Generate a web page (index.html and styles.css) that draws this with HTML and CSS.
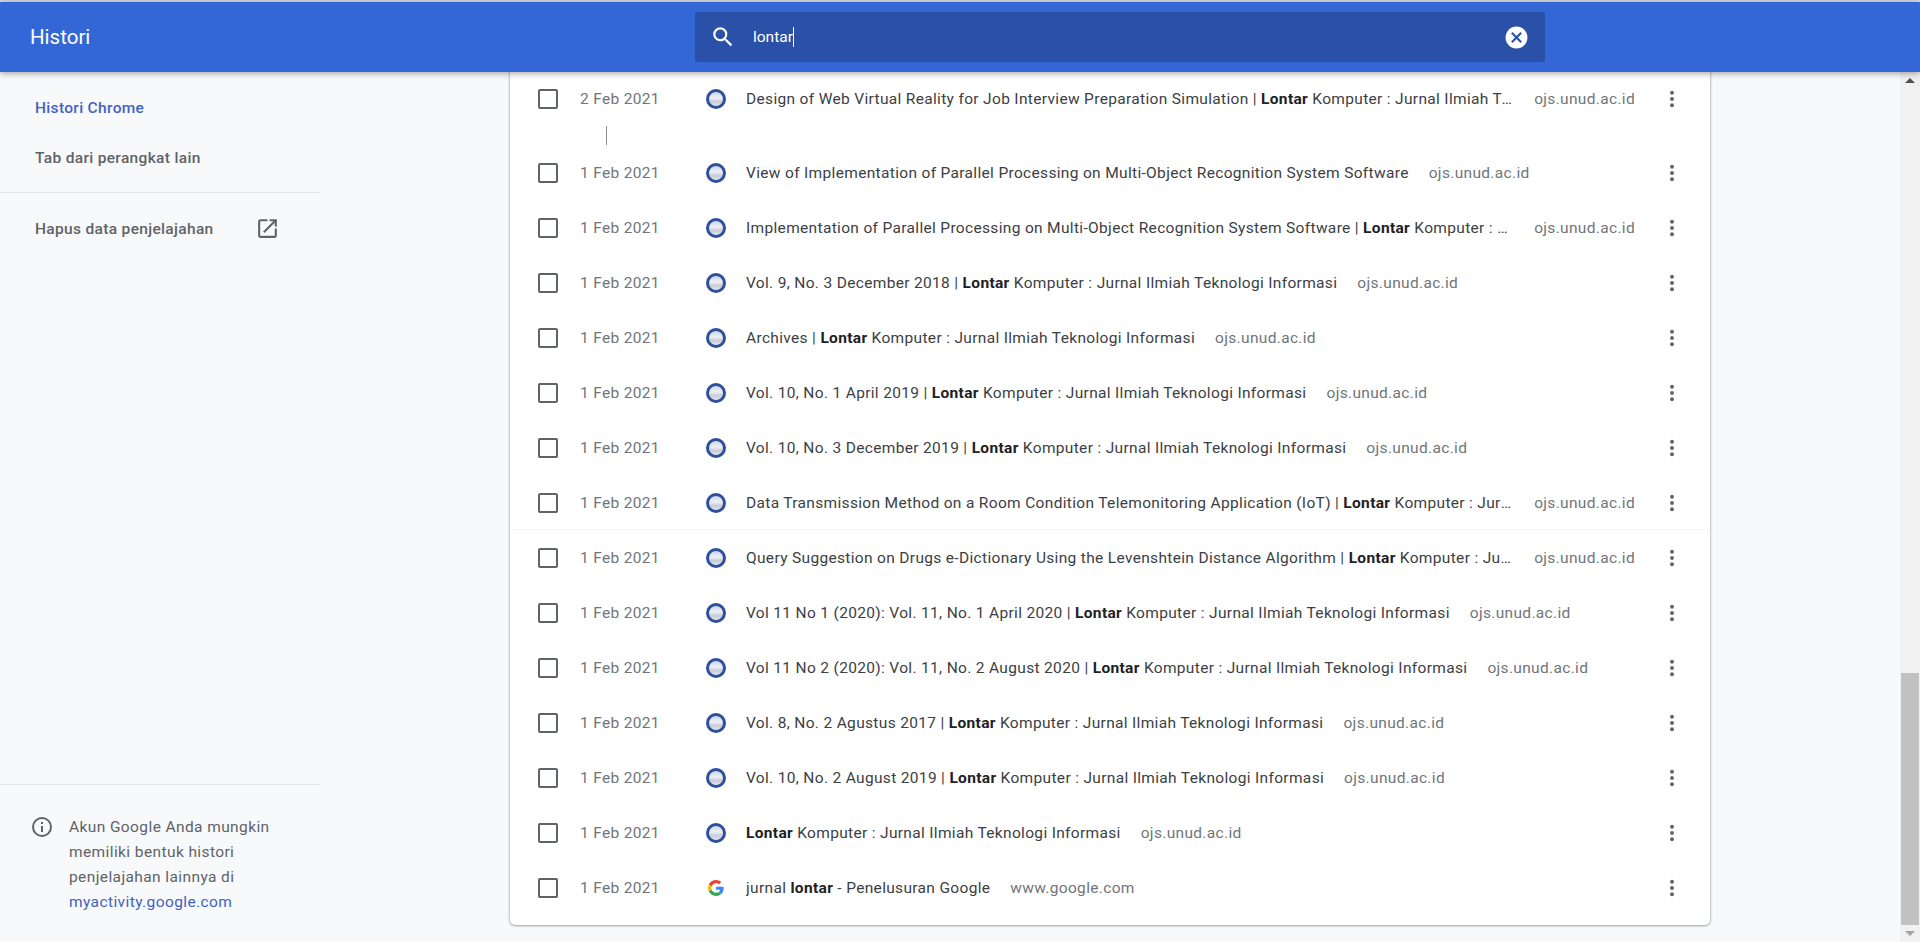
FILE: index.html
```html
<!DOCTYPE html>
<html lang="en">
<head>
    <meta charset="UTF-8">
    <meta name="viewport" content="width=device-width, initial-scale=1.0">
    <title>Histori</title>
    <link rel="stylesheet" href="styles.css">
</head>
<body>
<svg class="icon-defs" width="0" height="0">
    <symbol id="dots" viewBox="0 0 6 24">
        <circle cx="3" cy="5.7" r="1.95"/>
        <circle cx="3" cy="12" r="1.95"/>
        <circle cx="3" cy="18.3" r="1.95"/>
    </symbol>
</svg>
<header class="toolbar">
    <h1 class="toolbar-title">Histori</h1>
    <div class="search-box">
        <svg class="search-icon" viewBox="0 0 24 24"><path d="M15.5 14h-.79l-.28-.27A6.47 6.47 0 0 0 16 9.5 6.5 6.5 0 1 0 9.5 16c1.61 0 3.09-.59 4.23-1.57l.27.28v.79l5 4.99L20.49 19l-4.99-5zm-6 0C7.01 14 5 11.99 5 9.5S7.01 5 9.5 5 14 7.01 14 9.5 11.99 14 9.5 14z"/></svg>
        <span class="search-text">lontar</span><span class="search-caret"></span>
        <svg class="clear-icon" viewBox="0 0 24 24"><path d="M12 1.5a10.5 10.5 0 1 0 0 21 10.5 10.5 0 0 0 0-21zm5.2 14.3-1.4 1.4-3.8-3.8-3.8 3.8-1.4-1.4 3.8-3.8-3.8-3.8 1.4-1.4 3.8 3.8 3.8-3.8 1.4 1.4-3.8 3.8 3.8 3.8z"/></svg>
    </div>
</header>
<div class="page">
    <nav class="sidebar">
        <a class="side-link side-link-active">Histori Chrome</a>
        <a class="side-link">Tab dari perangkat lain</a>
        <div class="side-rule"></div>
        <a class="side-link side-clear">
            Hapus data penjelajahan
            <svg class="open-icon" viewBox="0 0 24 24"><path d="M19 19H5V5h7V3H5a2 2 0 0 0-2 2v14a2 2 0 0 0 2 2h14a2 2 0 0 0 2-2v-7h-2v7zM14 3v2h3.59l-9.83 9.83 1.41 1.41L19 6.41V10h2V3h-7z"/></svg>
        </a>
        <div class="side-footer">
            <svg class="info-icon" viewBox="0 0 24 24"><path d="M11 7h2v2h-2zm0 4h2v6h-2zm1-9a10 10 0 1 0 0 20 10 10 0 0 0 0-20zm0 18a8 8 0 1 1 0-16 8 8 0 0 1 0 16z"/></svg>
            <p class="side-note">Akun Google Anda mungkin memiliki bentuk histori penjelajahan lainnya di <a class="side-note-link">myactivity.google.com</a></p>
        </div>
    </nav>
    <main class="content">
        <section class="history-card">
            <div class="row">
                <span class="check"></span><span class="date">2 Feb 2021</span><span class="favicon"></span>
                <div class="entry"><span class="title">Design of Web Virtual Reality for Job Interview Preparation Simulation | <b>Lontar</b> Komputer : Jurnal Ilmiah Teknologi Informasi</span><span class="domain">ojs.unud.ac.id</span></div>
                <svg class="menu"><use href="#dots"/></svg>
            </div>
            <div class="day-gap"><span class="day-line"></span></div>
            <div class="row">
                <span class="check"></span><span class="date">1 Feb 2021</span><span class="favicon"></span>
                <div class="entry"><span class="title">View of Implementation of Parallel Processing on Multi-Object Recognition System Software</span><span class="domain">ojs.unud.ac.id</span></div>
                <svg class="menu"><use href="#dots"/></svg>
            </div>
            <div class="row">
                <span class="check"></span><span class="date">1 Feb 2021</span><span class="favicon"></span>
                <div class="entry"><span class="title">Implementation of Parallel Processing on Multi-Object Recognition System Software | <b>Lontar</b> Komputer : Jurnal Ilmiah Teknologi Informasi</span><span class="domain">ojs.unud.ac.id</span></div>
                <svg class="menu"><use href="#dots"/></svg>
            </div>
            <div class="row">
                <span class="check"></span><span class="date">1 Feb 2021</span><span class="favicon"></span>
                <div class="entry"><span class="title">Vol. 9, No. 3 December 2018 | <b>Lontar</b> Komputer : Jurnal Ilmiah Teknologi Informasi</span><span class="domain">ojs.unud.ac.id</span></div>
                <svg class="menu"><use href="#dots"/></svg>
            </div>
            <div class="row">
                <span class="check"></span><span class="date">1 Feb 2021</span><span class="favicon"></span>
                <div class="entry"><span class="title">Archives | <b>Lontar</b> Komputer : Jurnal Ilmiah Teknologi Informasi</span><span class="domain">ojs.unud.ac.id</span></div>
                <svg class="menu"><use href="#dots"/></svg>
            </div>
            <div class="row">
                <span class="check"></span><span class="date">1 Feb 2021</span><span class="favicon"></span>
                <div class="entry"><span class="title">Vol. 10, No. 1 April 2019 | <b>Lontar</b> Komputer : Jurnal Ilmiah Teknologi Informasi</span><span class="domain">ojs.unud.ac.id</span></div>
                <svg class="menu"><use href="#dots"/></svg>
            </div>
            <div class="row">
                <span class="check"></span><span class="date">1 Feb 2021</span><span class="favicon"></span>
                <div class="entry"><span class="title">Vol. 10, No. 3 December 2019 | <b>Lontar</b> Komputer : Jurnal Ilmiah Teknologi Informasi</span><span class="domain">ojs.unud.ac.id</span></div>
                <svg class="menu"><use href="#dots"/></svg>
            </div>
            <div class="row row-split">
                <span class="check"></span><span class="date">1 Feb 2021</span><span class="favicon"></span>
                <div class="entry"><span class="title">Data Transmission Method on a Room Condition Telemonitoring Application (IoT) | <b>Lontar</b> Komputer : Jurnal Ilmiah Teknologi Informasi</span><span class="domain">ojs.unud.ac.id</span></div>
                <svg class="menu"><use href="#dots"/></svg>
            </div>
            <div class="row">
                <span class="check"></span><span class="date">1 Feb 2021</span><span class="favicon"></span>
                <div class="entry"><span class="title">Query Suggestion on Drugs e-Dictionary Using the Levenshtein Distance Algorithm | <b>Lontar</b> Komputer : Jurnal Ilmiah Teknologi Informasi</span><span class="domain">ojs.unud.ac.id</span></div>
                <svg class="menu"><use href="#dots"/></svg>
            </div>
            <div class="row">
                <span class="check"></span><span class="date">1 Feb 2021</span><span class="favicon"></span>
                <div class="entry"><span class="title">Vol 11 No 1 (2020): Vol. 11, No. 1 April 2020 | <b>Lontar</b> Komputer : Jurnal Ilmiah Teknologi Informasi</span><span class="domain">ojs.unud.ac.id</span></div>
                <svg class="menu"><use href="#dots"/></svg>
            </div>
            <div class="row">
                <span class="check"></span><span class="date">1 Feb 2021</span><span class="favicon"></span>
                <div class="entry"><span class="title">Vol 11 No 2 (2020): Vol. 11, No. 2 August 2020 | <b>Lontar</b> Komputer : Jurnal Ilmiah Teknologi Informasi</span><span class="domain">ojs.unud.ac.id</span></div>
                <svg class="menu"><use href="#dots"/></svg>
            </div>
            <div class="row">
                <span class="check"></span><span class="date">1 Feb 2021</span><span class="favicon"></span>
                <div class="entry"><span class="title">Vol. 8, No. 2 Agustus 2017 | <b>Lontar</b> Komputer : Jurnal Ilmiah Teknologi Informasi</span><span class="domain">ojs.unud.ac.id</span></div>
                <svg class="menu"><use href="#dots"/></svg>
            </div>
            <div class="row">
                <span class="check"></span><span class="date">1 Feb 2021</span><span class="favicon"></span>
                <div class="entry"><span class="title">Vol. 10, No. 2 August 2019 | <b>Lontar</b> Komputer : Jurnal Ilmiah Teknologi Informasi</span><span class="domain">ojs.unud.ac.id</span></div>
                <svg class="menu"><use href="#dots"/></svg>
            </div>
            <div class="row">
                <span class="check"></span><span class="date">1 Feb 2021</span><span class="favicon"></span>
                <div class="entry"><span class="title"><b>Lontar</b> Komputer : Jurnal Ilmiah Teknologi Informasi</span><span class="domain">ojs.unud.ac.id</span></div>
                <svg class="menu"><use href="#dots"/></svg>
            </div>
            <div class="row">
                <span class="check"></span><span class="date">1 Feb 2021</span>
                <svg class="favicon-google" viewBox="0 0 48 48">
                    <path fill="#EA4335" d="M24 9.5c3.54 0 6.71 1.22 9.21 3.6l6.85-6.85C35.9 2.38 30.47 0 24 0 14.62 0 6.51 5.38 2.56 13.22l7.98 6.19C12.43 13.72 17.74 9.5 24 9.5z"/>
                    <path fill="#4285F4" d="M46.98 24.55c0-1.57-.15-3.09-.38-4.55H24v9.02h12.94c-.58 2.96-2.26 5.48-4.78 7.18l7.73 6c4.51-4.18 7.09-10.36 7.09-17.65z"/>
                    <path fill="#FBBC05" d="M10.53 28.59c-.48-1.45-.76-2.99-.76-4.59s.27-3.14.76-4.59l-7.98-6.19C.92 16.46 0 20.12 0 24c0 3.88.92 7.54 2.56 10.78l7.97-6.19z"/>
                    <path fill="#34A853" d="M24 48c6.48 0 11.93-2.13 15.89-5.81l-7.73-6c-2.15 1.45-4.92 2.3-8.16 2.3-6.26 0-11.57-4.22-13.47-9.91l-7.98 6.19C6.51 42.62 14.62 48 24 48z"/>
                </svg>
                <div class="entry"><span class="title">jurnal <b>lontar</b> - Penelusuran Google</span><span class="domain">www.google.com</span></div>
                <svg class="menu"><use href="#dots"/></svg>
            </div>
        </section>
    </main>
    <div class="scrollbar">
        <span class="scroll-arrow-up"></span>
        <div class="scroll-track"><div class="scroll-thumb"></div></div>
        <span class="scroll-arrow-down"></span>
    </div>
</div>
</body>
</html>
```

FILE: styles.css
```css
* {
    box-sizing: border-box;
}
html,
body {
    height: 100%;
}
body {
    margin: 0;
    padding-top: 2px;
    display: flex;
    flex-direction: column;
    overflow: hidden;
    background-color: #dfe1e5;
    color: #3c4043;
    font-family: Roboto, "Liberation Sans", sans-serif;
    font-size: 15.5px;
    letter-spacing: 0.33px;
}
.icon-defs {
    display: block;
    height: 0;
}

/* toolbar */
.toolbar {
    position: relative;
    z-index: 2;
    flex: none;
    height: 70px;
    display: flex;
    align-items: center;
    background-color: #3367d6;
    box-shadow: 0 1px 7px rgba(0, 0, 0, 0.4);
}
.toolbar-title {
    width: 695px;
    margin: 0;
    padding-left: 30px;
    color: #fff;
    font-size: 20.5px;
    font-weight: 400;
    letter-spacing: 0;
}
.search-box {
    width: 850px;
    height: 50px;
    display: flex;
    align-items: center;
    padding: 0 16px 0 15px;
    border-radius: 2px;
    background-color: #2a50a7;
    color: #fff;
}
.search-icon {
    width: 26px;
    height: 26px;
    margin-right: 17px;
    fill: #fff;
}
.search-text {
    font-size: 15.5px;
    letter-spacing: 0;
}
.search-caret {
    width: 1px;
    height: 20px;
    background-color: #fff;
}
.clear-icon {
    width: 25px;
    height: 25px;
    margin-left: auto;
    fill: #fff;
}

/* sidebar */
.page {
    flex: 1;
    min-height: 0;
    display: flex;
    background-color: #f8f9fa;
}
.sidebar {
    flex: none;
    width: 320px;
    display: flex;
    flex-direction: column;
    padding-top: 11px;
    font-weight: 500;
}
.side-link {
    height: 50px;
    display: flex;
    align-items: center;
    padding-left: 35px;
    color: #5f6368;
}
.side-link-active {
    color: #4162c4;
}
.side-rule {
    height: 1px;
    margin-top: 9px;
    background-color: #e4e6e9;
}
.side-clear {
    height: 71px;
    padding-right: 40px;
    justify-content: space-between;
}
.open-icon {
    width: 25px;
    height: 25px;
    fill: #5f6368;
}
.side-footer {
    margin-top: auto;
    display: flex;
    padding: 30px 20px 27px 32px;
    border-top: 1px solid #e4e6e9;
    font-weight: 400;
}
.info-icon {
    flex: none;
    width: 24px;
    height: 24px;
    margin: 0 15px 0 -2px;
    fill: #5f6368;
}
.side-note {
    margin: 0;
    line-height: 25px;
    color: #5f6368;
    letter-spacing: 0.4px;
}
.side-note-link {
    color: #4162c4;
}

/* history list */
.content {
    flex: 1;
    min-width: 0;
    padding-left: 190px;
    padding-right: 190px;
}
.history-card {
    width: 1200px;
    margin-top: -1px;
    padding-bottom: 10px;
    border-radius: 0 0 5px 5px;
    background-color: #fff;
    box-shadow: 0 0 3px rgba(60, 64, 67, 0.45), 0 1px 2px rgba(60, 64, 67, 0.3);
}
.row {
    height: 55px;
    display: flex;
    align-items: center;
    padding: 0 35px 0 28px;
}
.row-split {
    box-shadow: inset 0 -1px 0 #f3f4f5;
}
.check {
    flex: none;
    width: 20px;
    height: 20px;
    border: 2px solid #5f6368;
    border-radius: 2px;
}
.date {
    flex: none;
    width: 126px;
    margin-left: 22px;
    color: #70757a;
}
.favicon {
    flex: none;
    width: 20px;
    height: 20px;
    border: 3px solid #2f4f9c;
    border-radius: 50%;
    background: linear-gradient(#c9d5ec, #eef0f4 42%, #c6cbd5 70%, #e4e9f2);
}
.favicon-google {
    flex: none;
    width: 16px;
    height: 16px;
    margin: 0 2px;
}
.entry {
    flex: 1;
    min-width: 0;
    display: flex;
    margin-left: 20px;
}
.title {
    min-width: 0;
    overflow: hidden;
    white-space: nowrap;
    text-overflow: ellipsis;
}
.title b {
    color: #202124;
    font-weight: 700;
}
.domain {
    flex: none;
    margin-left: 20px;
    color: #70757a;
}
.menu {
    flex: none;
    width: 6px;
    height: 24px;
    margin-left: 34px;
    fill: #5f6368;
}
.day-gap {
    height: 19px;
    padding-left: 96px;
}
.day-line {
    display: block;
    width: 1px;
    height: 19px;
    background-color: #8a8d91;
}

/* scrollbar */
.scrollbar {
    flex: none;
    width: 20px;
    display: flex;
    flex-direction: column;
    align-items: center;
    background-color: #f1f1f1;
}
.scroll-arrow-up {
    margin: 6px 0 5px;
    border: 5px solid transparent;
    border-top-width: 0;
    border-bottom: 5px solid #505050;
}
.scroll-track {
    flex: 1;
    width: 100%;
    display: flex;
    align-items: flex-end;
    padding: 0 1px;
}
.scroll-thumb {
    width: 100%;
    height: 252px;
    background-color: #c1c1c1;
}
.scroll-arrow-down {
    margin: 6px 0 6px;
    border: 5px solid transparent;
    border-bottom-width: 0;
    border-top: 5px solid #a3a3a3;
}
```
